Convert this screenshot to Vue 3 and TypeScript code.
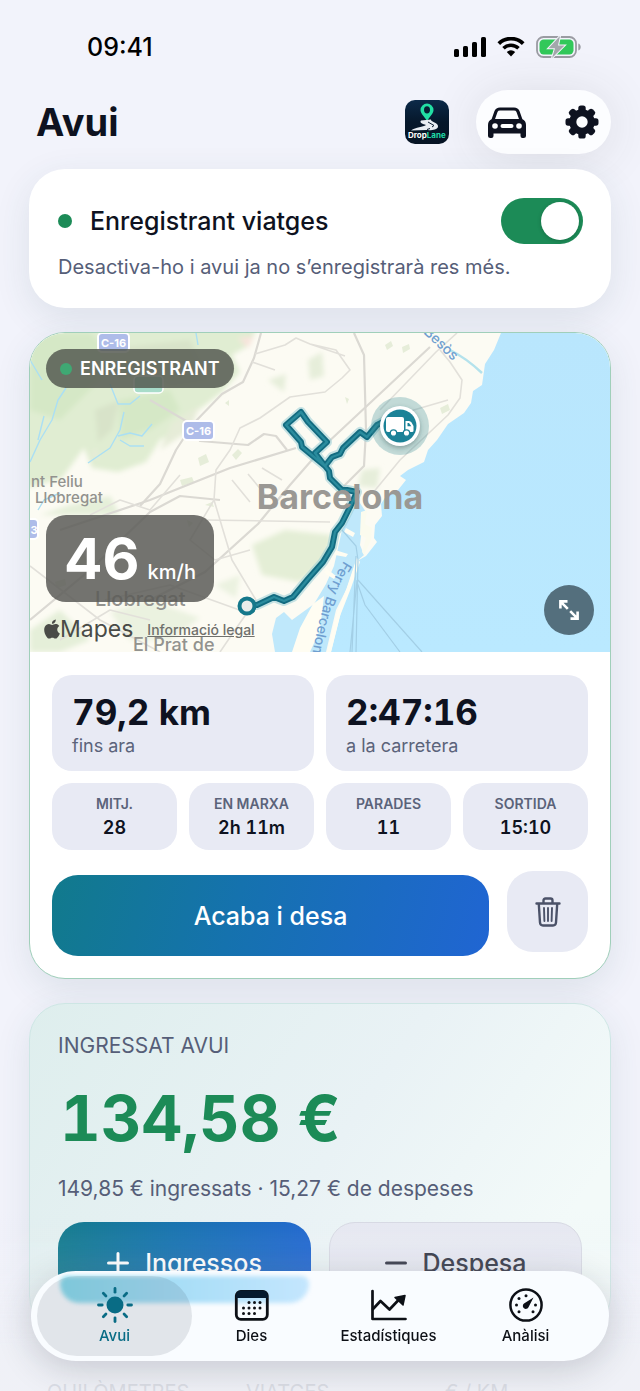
<script setup lang="ts">
import { ref } from 'vue'

interface Stat {
  label: string
  value: string
}

const recording = ref(true)
const activeTab = ref('Avui')

const totals: Stat[] = [
  { value: '79,2 km', label: 'fins ara' },
  { value: '2:47:16', label: 'a la carretera' },
]

const details: Stat[] = [
  { label: 'MITJ.', value: '28' },
  { label: 'EN MARXA', value: '2h 11m' },
  { label: 'PARADES', value: '11' },
  { label: 'SORTIDA', value: '15:10' },
]

const summary: string[] = ['QUILÒMETRES', 'VIATGES', '€ / KM']
const tabs: string[] = ['Avui', 'Dies', 'Estadístiques', 'Anàlisi']
const eighths: number[] = [0, 45, 90, 135, 180, 225, 270, 315]

const route =
  'M247 605 L257 605 L274 597 L284 601 L293 597 L308 579 L323 562 L332 547 L335 532 L342 523 L350 507 L357 492 L347 490 L342 490 L330 478 L329 471 L325 466 L302 447 L301 442 L286 425 L301 412 L308 422 L327 442 L315 453 L325 466 L332 457 L340 454 L343 448 L360 432 L367 437 L377 425 L385 421'
</script>

<template>
  <div class="screen">
    <div class="status">
      <span class="clock">09:41</span>
      <span class="signals">
        <svg width="32" height="20" viewBox="0 0 32 20" aria-hidden="true">
          <rect x="0" y="12" width="5" height="8" rx="1.6" />
          <rect x="9" y="9" width="5" height="11" rx="1.6" />
          <rect x="18" y="5" width="5" height="15" rx="1.6" />
          <rect x="27" y="0" width="5" height="20" rx="1.6" />
        </svg>
        <svg width="28" height="20" viewBox="0 0 28 20" aria-hidden="true">
          <path d="M1.8 6.6 A17.5 17.5 0 0 1 26.2 6.6" fill="none" stroke="#000" stroke-width="3.8" />
          <path d="M6.5 11.3 A10.8 10.8 0 0 1 21.5 11.3" fill="none" stroke="#000" stroke-width="3.6" />
          <path d="M9.8 15 A6.2 6.2 0 0 1 18.2 15 L14 19.6 Z" />
        </svg>
        <svg width="46" height="22" viewBox="0 0 46 22" aria-hidden="true">
          <rect x="1" y="1" width="39" height="20" rx="6.5" fill="none" stroke="#9a9ba2" stroke-width="1.8" />
          <rect x="3.5" y="3.5" width="34" height="15" rx="4.2" fill="#32c85a" />
          <path d="M42.3 7.5 C45.5 8.5 45.5 13.5 42.3 14.5 Z" fill="#9a9ba2" />
          <path d="M24 0 L12.5 12.3 H19 L16 22 L28.5 9.5 H22 Z" fill="#a3a7ab" stroke="#f3f4fb" stroke-width="2" paint-order="stroke" />
        </svg>
      </span>
    </div>

    <header class="header">
      <h1>Avui</h1>
      <svg class="logo" width="44" height="44" viewBox="0 0 44 44" role="img" aria-label="DropLane">
        <defs>
          <linearGradient id="logoBg" x1="0" y1="0" x2="0" y2="1">
            <stop offset="0" stop-color="#0c2a49" />
            <stop offset="0.5" stop-color="#06182b" />
            <stop offset="1" stop-color="#071424" />
          </linearGradient>
        </defs>
        <rect width="44" height="44" rx="10" fill="url(#logoBg)" />
        <path d="M22 21 C19 16 15.5 13.5 15.5 10 A6.5 6.5 0 0 1 28.5 10 C28.5 13.5 25 16 22 21 Z" fill="#22dfa4" />
        <ellipse cx="22" cy="9.8" rx="3" ry="3.6" fill="#072033" />
        <path d="M16 20.5 L26 19.5 C25 22 34 22.5 33 27 C32 30 26 30.5 21 30 L6 30.5 C11 27 18 27 21 25 C18 24 14 23 16 20.5 Z" fill="#e8edf2" />
        <path d="M23 22 L29 25.5 L27 27 M25 28.5 L22 29.5" fill="none" stroke="#0a1c2e" stroke-width="1" />
        <text x="3" y="38" class="logo-text" fill="#fff">Drop<tspan fill="#20dba8">Lane</tspan></text>
      </svg>
      <div class="actions">
        <button type="button" aria-label="Vehicle">
          <svg width="38" height="31" viewBox="0 0 38 31">
            <path d="M5 13 L8 4.5 Q9 2 12 2 H26 Q29 2 30 4.5 L33 13" fill="none" stroke="#0e1220" stroke-width="3.2" />
            <path d="M4 12 H34 Q38 13.5 38 18 V28.5 Q38 31 35.5 31 H34.5 Q32.5 31 32.5 29 V26.5 H5.5 V29 Q5.5 31 3.5 31 H2.5 Q0 31 0 28.5 V18 Q0 13.5 4 12 Z" fill="#0e1220" />
            <circle cx="7" cy="19" r="2.8" fill="#fff" />
            <circle cx="31" cy="19" r="2.8" fill="#fff" />
            <rect x="12.5" y="17" width="13" height="4" rx="2" fill="#fff" />
          </svg>
        </button>
        <button type="button" aria-label="Configuració">
          <svg width="34" height="34" viewBox="-17 -17 34 34">
            <rect v-for="a in eighths" :key="a" x="-3.7" y="-16.5" width="7.4" height="12" rx="2.6" :transform="`rotate(${a})`" fill="#0e1220" />
            <circle r="9.2" fill="none" stroke="#0e1220" stroke-width="7" />
            <circle r="5.7" fill="#fcfdff" />
          </svg>
        </button>
      </div>
    </header>

    <main class="content">
      <section class="card record">
        <div class="record-row">
          <span class="dot"></span>
          <label for="recording">Enregistrant viatges</label>
          <input id="recording" v-model="recording" class="switch" type="checkbox" role="switch" />
        </div>
        <p>Desactiva-ho i avui ja no s’enregistrarà res més.</p>
      </section>

      <section class="card trip">
        <div class="map">
          <svg class="map-art" viewBox="30 333 580 319" preserveAspectRatio="xMidYMid slice" role="img" aria-label="Mapa de Barcelona">
            <defs>
              <filter id="soft" x="-20%" y="-20%" width="140%" height="140%"><feGaussianBlur stdDeviation="2.5" /></filter>
              <linearGradient id="sea" x1="0" y1="0" x2="0" y2="1">
                <stop offset="0" stop-color="#b9e6fd" />
                <stop offset="1" stop-color="#bae9ff" />
              </linearGradient>
            </defs>
            <rect x="30" y="333" width="580" height="319" fill="#fcfbf3" />
            <!-- hills -->
            <g filter="url(#soft)">
              <path d="M20 323 H258 L250 345 L232 355 L240 372 L222 392 L196 412 L178 430 L160 440 L146 462 L118 472 L92 468 L84 448 L62 478 L20 490 Z" fill="#e0edd2" />
              <path d="M30 333 H90 L120 360 L80 400 L60 420 L30 410 Z M120 400 L170 390 L180 410 L150 430 L120 440 Z" fill="#d5e8c6" />
              <path d="M100 350 L190 340 L210 380 L170 386 L150 372 L120 380 Z M95 410 L120 400 L112 430 L98 442 Z" fill="#d8e3c9" />
              <path d="M172 423 L200 405 L190 430 L160 450 Z M90 455 L96 447 L100 460 Z" fill="#e6ecd8" />
              <path d="M70 505 L110 496 L120 515 H40 Z M30 630 L60 610 L90 640 L60 652 H30 Z" fill="#e5efd9" />
              <path d="M252 545 L285 530 L332 535 L326 560 L300 582 L262 575 Z" fill="#e4eed6" />
              <path d="M110 612 L150 600 L200 618 L170 640 L130 640 Z M215 585 L240 575 L236 598 Z" fill="#ebf2e0" />
              <path d="M308 360 L322 352 L324 376 L310 380 Z M362 470 L380 468 L377 488 L358 486 Z M268 380 L286 374 L284 392 Z" fill="#e6eeda" />
              <path d="M238 338 L254 336 L248 348 Z" fill="#f8e4dc" />
            </g>
            <g fill="#e6edd9">
              <path d="M198 458 l8 -4 l3 8 l-9 4z M232 455 l6 -6 l4 4 l-6 7z M180 480 l12 -3 l2 5 l-12 4z M385 345 l6 -4 l2 5 l-6 4z M440 408 l8 -4 l2 6 l-8 4z M402 347 l7 -3 l1 5 l-7 4z M345 397 l4 2 l-2 5z M225 403 l4 -3 v6z M55 582 l10 -3 l1 6 l-9 3z M187 520 l6 3 l-4 4z M205 505 l7 -3 l2 5z M70 560 l14 -6 l4 8 l-13 5z" />
            </g>
            <!-- streams -->
            <g fill="none" stroke="#aadff4" stroke-width="1.4" stroke-linejoin="round">
              <path d="M30 462 L40 440 L52 420 L58 400 L66 388 M38 440 L44 416 M88 463 L110 448 L120 430 L124 412 M118 436 L130 433 L142 436 L152 424 M120 440 L130 446 L144 446 M110 384 L118 404 L130 404 L140 396 M30 360 L42 380 M196 333 L198 345 M60 493 L44 500 L38 510" />
            </g>
            <!-- roads -->
            <g fill="none" stroke="#dbd9d3" stroke-width="2.2" stroke-linejoin="round">
              <path d="M261 333 L254 358 L243 382 L222 394 L193 424 L176 450 L160 484 L140 506" />
              <path d="M193 424 L200 441 L248 445 L264 434 L276 436 L287 450" />
              <path d="M150 400 L188 422 M354 333 L364 355 L366 430 L364 466 L340 490" />
              <path d="M60 530 L150 500 L230 468 L296 448" />
              <path d="M30 620 L90 570 L150 512 L180 496 L220 500" />
              <path d="M430 347 L370 403 L325 445 L290 485 L258 524 L205 572 L150 600" />
            </g>
            <g fill="none" stroke="#e2e0da" stroke-width="1.6" stroke-linejoin="round">
              <path d="M440 350 L450 362 L462 380 L460 398 L448 415 L430 432 L400 460 L372 494" />
              <path d="M457 333 L436 352 L380 410 M255 354 L285 345 L296 338 L310 344 L345 356 M310 344 L336 350 L350 370 L342 378 L325 392 L290 397 L260 418 L240 428 L230 450 L216 470 L214 500 L232 560 L256 600" />
              <path d="M205 520 L330 522 M214 500 L190 540 L215 560 L250 550 M30 566 L100 620 L160 652 M256 600 L235 630 L220 652" />
              <path d="M252 362 L275 370 M232 480 L250 502 M248 474 L268 498 M262 468 L282 480 M448 400 L400 414 M105 600 L170 585 L245 612" />
              <path d="M90 515 L120 500 L150 510 L180 475 M60 640 L110 610 L150 620" />
            </g>
            <!-- coast -->
            <path d="M501 333 L494 350 L485 364 L482 385 L473 391 L471 403 L464 413 L448 424 L437 440 L428 450 L424 462 L408 470 L400 476 L406 480 L398 490 L386 496 L381 504 L382 516 L375 525 L374 538 L377 542 L366 556 L359 560 L344 600 L331 652 H610 V333 Z" fill="url(#sea)" />
            <path d="M358 500 L366 512 L362 528 L360 545 L364 555 L356 562 L347 588 L336 610 L326 652 L275 652 L272 634 L276 618 L284 612 L292 620 L314 604 L326 584 L334 566 L338 548 L342 530 L350 516 Z" fill="#bfe8fb" />
            <path d="M357 557 L346 590 L337 612 L327 652 L331 652 L340 616 L351 588 L360 562 Z M335 550 L348 554 L346 557 L335 555 Z M346 528 L355 533 L353 537 L344 532 Z M326 568 L336 576 L334 579 L324 573 Z M313 604 L324 596 L320 630 L310 652 H292 L300 628 Z" fill="#fffdf2" />
            <path d="M361 512 L367 510 L365 524 L372 528 L371 540 L364 555 L362 552 L366 538 L360 535 Z" fill="#fbfbee" />
            <path d="M450 350 Q466 358 482 373" fill="none" stroke="#b4e2ec" stroke-width="2.5" />
            <path d="M342 530 L356 546 L358 560 L356 652 M356 556 L352 652 M357 580 L350 652 M357 582 L365 605 L400 652 M358 580 L422 652" fill="none" stroke="#a3cfe6" stroke-width="1.2" />
            <!-- road shields -->
            <g class="shield">
              <rect x="98" y="333" width="31" height="19" rx="4" />
              <text x="113.5" y="347">C-16</text>
              <rect x="183" y="421" width="31" height="19" rx="4" />
              <text x="198.5" y="435">C-16</text>
              <rect x="12" y="519" width="26" height="20" rx="4" />
              <text x="34" y="534">3</text>
            </g>
            <rect x="134" y="376" width="29" height="17" rx="4" fill="#a8dcc9" stroke="#fff" stroke-width="1.5" />
            <g class="place">
              <text x="31" y="487" font-size="15">nt Feliu</text>
              <text x="35" y="503" font-size="15">Llobregat</text>
              <text x="95" y="606" font-size="20">Llobregat</text>
              <text x="133" y="651" font-size="18">El Prat de</text>
            </g>
            <path id="besos" d="M423 333 L472 379" fill="none" />
            <text class="water river"><textPath href="#besos">Besòs</textPath></text>
            <path id="ferry" d="M344 561 Q320 598 311 664" fill="none" />
            <text class="water ferry"><textPath href="#ferry">Ferry Barcelon</textPath></text>
            <!-- recorded route -->
            <path :d="route" fill="none" stroke="#8fc9d4" stroke-opacity="0.5" stroke-width="10" stroke-linejoin="round" stroke-linecap="round" />
            <path :d="route" fill="none" stroke="#126b80" stroke-width="6" stroke-linejoin="round" stroke-linecap="round" />
            <path :d="route" fill="none" stroke="#2a8b9d" stroke-width="2.4" stroke-linejoin="round" />
            <text class="city" x="340" y="509">Barcelona</text>
            <circle cx="247" cy="606" r="7.5" fill="#e9ecea" stroke="#15788b" stroke-width="4" />
            <circle cx="400" cy="426" r="29" fill="#3b8d98" fill-opacity="0.3" />
            <circle cx="400" cy="428" r="20" fill="#244" fill-opacity="0.4" filter="url(#soft)" />
            <circle cx="400" cy="426" r="20" fill="#fff" />
            <circle cx="400" cy="426" r="16.5" fill="#1b8297" />
            <g fill="#fff">
              <path d="M388 417 H402 Q404 417 404 419 V432 H388 Q386 432 386 430 V419 Q386 417 388 417 Z" />
              <path d="M405.5 421 H409 Q410.5 421 411.5 422.5 L413.5 426 V431 Q413.5 432 412 432 H405.5 Z" />
              <path d="M407.5 423 H409 L411.3 426.2 H407.5 Z" fill="#1b8297" />
              <circle cx="393.5" cy="433" r="3.2" stroke="#1b8297" stroke-width="1.3" />
              <circle cx="406.5" cy="433" r="3.2" stroke="#1b8297" stroke-width="1.3" />
            </g>
          </svg>

          <span class="badge"><span class="badge-dot"></span>ENREGISTRANT</span>
          <span class="speed"><strong>46</strong><span>km/h</span></span>
          <div class="attribution">
            <span class="maps">
              <svg width="16" height="20" viewBox="2 0 20 24" aria-hidden="true">
                <path d="M12.152 6.896c-.948 0-2.415-1.078-3.960-1.040-2.040.027-3.910 1.183-4.961 3.014-2.117 3.675-.546 9.103 1.519 12.090 1.013 1.454 2.208 3.090 3.792 3.039 1.520-.065 2.090-.987 3.935-.987 1.831 0 2.350.987 3.960.948 1.637-.026 2.676-1.480 3.676-2.948 1.156-1.688 1.636-3.325 1.662-3.415-.039-.013-3.182-1.221-3.220-4.857-.026-3.040 2.480-4.494 2.597-4.559-1.429-2.090-3.623-2.324-4.390-2.376-2-.156-3.675 1.090-4.610 1.090zM15.530 3.830c.843-1.012 1.400-2.427 1.245-3.830-1.207.052-2.662.805-3.532 1.818-.780.896-1.454 2.338-1.273 3.714 1.338.104 2.715-.688 3.559-1.701" fill="#494b47" />
              </svg>Mapes</span>
            <a href="#">Informació legal</a>
          </div>
          <button class="expand" type="button" aria-label="Amplia el mapa">
            <svg width="20" height="20" viewBox="0 0 20 20" fill="none" stroke="#fff" stroke-width="2.6">
              <path d="M1.4 8.5 V1.4 H8.5 M1.6 1.6 L8.8 8.8 M18.6 11.5 V18.6 H11.5 M18.4 18.4 L11.2 11.2" />
            </svg>
          </button>
        </div>

        <div class="trip-body">
          <dl class="totals">
            <div v-for="t in totals" :key="t.label" class="total">
              <dd>{{ t.value }}</dd>
              <dt>{{ t.label }}</dt>
            </div>
          </dl>
          <dl class="details">
            <div v-for="d in details" :key="d.label" class="detail">
              <dt>{{ d.label }}</dt>
              <dd>{{ d.value }}</dd>
            </div>
          </dl>
          <div class="trip-actions">
            <button class="finish" type="button">Acaba i desa</button>
            <button class="discard" type="button" aria-label="Descarta el viatge">
              <svg width="26" height="30" viewBox="0 0 26 30" fill="none" stroke="#4b5268" stroke-width="2.4" stroke-linecap="round" stroke-linejoin="round">
                <path d="M1.5 6.5 H24.5 M8.5 6 V3.5 Q8.5 1.5 10.5 1.5 H15.5 Q17.5 1.5 17.5 3.5 V6 M3.8 7 L5 25.5 Q5.2 28.5 8 28.5 H18 Q20.8 28.5 21 25.5 L22.2 7" />
                <path d="M9 11 L9.4 24 M13 11 V24 M17 11 L16.6 24" stroke-width="1.9" />
              </svg>
            </button>
          </div>
        </div>
      </section>

      <section class="card income">
        <h2>INGRESSAT AVUI</h2>
        <p class="amount">134,58 €</p>
        <p class="breakdown">149,85 € ingressats · 15,27 € de despeses</p>
        <div class="income-actions">
          <button class="add" type="button">
            <svg width="22" height="22" viewBox="0 0 22 22" stroke="currentColor" stroke-width="3" stroke-linecap="round"><path d="M1.5 11 H20.5 M11 1.5 V20.5" /></svg>Ingressos
          </button>
          <button class="spend" type="button">
            <svg width="22" height="22" viewBox="0 0 22 22" stroke="currentColor" stroke-width="3" stroke-linecap="round"><path d="M1.5 11 H20.5" /></svg>Despesa
          </button>
        </div>
      </section>

      <section class="summary">
        <div v-for="s in summary" :key="s">{{ s }}</div>
      </section>
    </main>

    <div class="fade"></div>
    <nav class="tabbar">
      <button v-for="t in tabs" :key="t" type="button" class="tab" :class="{ active: t === activeTab }" @click="activeTab = t">
        <svg v-if="t === 'Avui'" width="36" height="36" viewBox="-18 -18 36 36">
          <circle r="8.5" fill="currentColor" />
          <path v-for="a in eighths" :key="a" d="M0 -12.8 V-16.5" :transform="`rotate(${a})`" stroke="currentColor" stroke-width="2.8" stroke-linecap="round" />
        </svg>
        <svg v-else-if="t === 'Dies'" width="36" height="36" viewBox="0 0 36 36">
          <rect x="2.3" y="4.3" width="31" height="28" rx="4.5" fill="none" stroke="#0d1016" stroke-width="2.8" />
          <path d="M2 10 Q2 3.5 7 3.5 H29 Q34 3.5 34 10 V11 H2 Z" fill="#051a2e" />
          <g fill="#0d1016">
            <circle cx="15" cy="15.5" r="1.5" /><circle cx="20.5" cy="15.5" r="1.5" /><circle cx="26" cy="15.5" r="1.5" />
            <circle cx="9.5" cy="21" r="1.5" /><circle cx="15" cy="21" r="1.5" /><circle cx="20.5" cy="21" r="1.5" /><circle cx="26" cy="21" r="1.5" />
            <circle cx="9.5" cy="26.5" r="1.5" /><circle cx="15" cy="26.5" r="1.5" /><circle cx="20.5" cy="26.5" r="1.5" />
          </g>
        </svg>
        <svg v-else-if="t === 'Estadístiques'" width="36" height="36" viewBox="0 0 36 36" fill="none" stroke="#0d1016" stroke-width="2.7" stroke-linecap="round" stroke-linejoin="round">
          <path d="M1.5 4 V32 H34.5" />
          <path d="M2 22 L9.5 14 L18.5 22.5 L28 12.5" />
          <path d="M24 10.5 L34 8.5 L32 18 Z" fill="#0d1016" stroke-width="1.5" />
        </svg>
        <svg v-else width="36" height="36" viewBox="0 0 36 36">
          <circle cx="18" cy="18" r="15.6" fill="none" stroke="#0d1016" stroke-width="2.5" />
          <path d="M25.5 10.5 L20.6 20 A3 3 0 1 1 16 16.5 Z" fill="#0d1016" />
          <g fill="#0d1016">
            <circle cx="8.5" cy="18" r="1.5" /><circle cx="11" cy="11.5" r="1.5" /><circle cx="18" cy="8.7" r="1.5" />
            <circle cx="27.5" cy="18" r="1.5" /><circle cx="25" cy="24.7" r="1.5" /><circle cx="11" cy="24.7" r="1.5" />
          </g>
        </svg>
        <span>{{ t }}</span>
      </button>
    </nav>
  </div>
</template>

<style>
html,
body {
  background: #f2f3fb;
}
</style>

<style scoped>
* {
  box-sizing: border-box;
}
.screen {
  position: relative;
  height: 100vh;
  overflow: hidden;
  padding: 0 29px;
  background: #f2f3fb;
  color: #0e1220;
  font-family: Inter, "Noto Sans", sans-serif;
}
button {
  padding: 0;
  border: 0;
  background: none;
  color: inherit;
  font: inherit;
  cursor: pointer;
}
svg {
  display: block;
}
h1,
h2,
p,
dl,
dd {
  margin: 0;
}
.status {
  display: flex;
  align-items: center;
  justify-content: space-between;
  height: 90px;
  padding: 4px 29px 0 58px;
}
.clock {
  color: #000;
  font-size: 25px;
  font-weight: 500;
}
.signals {
  display: flex;
  align-items: center;
  gap: 11px;
}
.header {
  display: flex;
  align-items: center;
  height: 64px;
  padding-left: 7px;
}
h1 {
  flex: 1;
  font-size: 38px;
  font-weight: 700;
  line-height: 48px;
}
.logo {
  margin-right: 27px;
}
.logo-text {
  font-size: 8px;
  font-weight: 700;
}
.actions {
  display: flex;
  align-items: center;
  justify-content: space-between;
  width: 135px;
  height: 64px;
  padding: 0 12px;
  border-radius: 32px;
  background: #fcfdff;
  box-shadow: 0 4px 50px rgba(60, 60, 60, 0.12);
}
.content {
  display: flex;
  flex-direction: column;
  gap: 24px;
  padding-top: 15px;
}
.card {
  border-radius: 36px;
  background: #fff;
  box-shadow: 0 10px 36px rgba(50, 80, 90, 0.11);
}
.record {
  padding: 29px 28px 27px 29px;
}
.record-row {
  display: flex;
  align-items: center;
  height: 46px;
}
.dot {
  width: 14px;
  height: 14px;
  margin-right: 18px;
  border-radius: 50%;
  background: #1c8b57;
}
.record label {
  flex: 1;
  font-size: 25px;
  font-weight: 500;
}
.switch {
  width: 82px;
  height: 46px;
  margin: 0;
  padding: 4px;
  border-radius: 23px;
  background: #c9ccd6;
  appearance: none;
  cursor: pointer;
}
.switch::before {
  display: block;
  width: 38px;
  height: 38px;
  border-radius: 50%;
  background: #fff;
  box-shadow: 0 1px 4px rgba(0, 0, 0, 0.2);
  content: "";
}
.switch:checked {
  background: #1c8b57;
}
.switch:checked::before {
  margin-left: auto;
}
.record p {
  margin-top: 10px;
  color: #565e78;
  font-size: 20px;
  line-height: 27px;
}
.trip {
  overflow: hidden;
  border: 1px solid #a0cfba;
}
.map {
  position: relative;
  height: 319px;
}
.map-art {
  width: 100%;
  height: 100%;
}
.shield rect {
  fill: #aebce9;
  stroke: #fff;
  stroke-width: 2;
}
.shield text {
  fill: #fff;
  font-size: 11px;
  font-weight: 700;
  text-anchor: middle;
}
.place {
  fill: #92928e;
  font-weight: 500;
}
.city {
  fill: #9a9894;
  font-size: 34px;
  font-weight: 700;
  text-anchor: middle;
}
.water {
  fill: #6f9fd0;
  font-weight: 500;
}
.river {
  font-size: 14px;
}
.ferry {
  font-size: 14px;
}
.badge {
  position: absolute;
  top: 16px;
  left: 16px;
  display: flex;
  align-items: center;
  gap: 8px;
  height: 39px;
  padding: 0 14px;
  border-radius: 20px;
  background: rgba(84, 88, 80, 0.84);
  color: #fff;
  font-size: 18px;
  font-weight: 600;
}
.badge-dot {
  width: 12px;
  height: 12px;
  border-radius: 50%;
  background: #3fa873;
}
.speed {
  position: absolute;
  top: 182px;
  left: 16px;
  display: flex;
  align-items: baseline;
  gap: 8px;
  height: 87px;
  padding: 0 18px;
  border-radius: 20px;
  background: rgba(90, 91, 87, 0.85);
  color: #fff;
  font-size: 20px;
  font-weight: 500;
  line-height: 87px;
}
.speed strong {
  font-size: 57px;
  font-weight: 700;
}
.attribution {
  position: absolute;
  bottom: 9px;
  left: 14px;
  display: flex;
  align-items: center;
  gap: 14px;
  color: #494b47;
}
.maps {
  display: flex;
  align-items: center;
  font-size: 23px;
  line-height: 28px;
}
.attribution a {
  color: #6f706c;
  font-size: 14px;
  font-weight: 500;
}
.expand {
  position: absolute;
  right: 16px;
  bottom: 17px;
  display: grid;
  place-items: center;
  width: 50px;
  height: 50px;
  border-radius: 50%;
  background: #546f7d;
}
.trip-body {
  padding: 23px 22px 22px;
}
.totals {
  display: grid;
  grid-template-columns: repeat(2, 1fr);
  gap: 12px;
}
.total,
.detail {
  display: flex;
  flex-direction: column;
  border-radius: 20px;
  background: #e8eaf4;
}
.total {
  height: 96px;
  padding: 16px 20px 0;
}
.total dd {
  font-size: 35px;
  font-weight: 700;
  font-variant-numeric: tabular-nums;
  line-height: 42px;
}
.total dt {
  color: #5b637a;
  font-size: 18px;
  line-height: 26px;
}
.details {
  display: grid;
  grid-template-columns: repeat(4, 1fr);
  gap: 12px;
  margin-top: 12px;
}
.detail {
  align-items: center;
  height: 67px;
  padding-top: 9px;
}
.detail dt {
  color: #5b637a;
  font-size: 14px;
  font-weight: 600;
  line-height: 24px;
}
.detail dd {
  font-size: 18px;
  font-weight: 600;
  font-variant-numeric: tabular-nums;
  line-height: 24px;
}
.trip-actions {
  display: flex;
  align-items: flex-start;
  gap: 18px;
  margin-top: 21px;
}
.finish {
  flex: 1;
  height: 81px;
  margin-top: 4px;
  border-radius: 26px;
  background: linear-gradient(105deg, #117a8c, #1572ae 42%, #2065d3);
  color: #fff;
  font-size: 25px;
  font-weight: 500;
}
.discard {
  display: grid;
  place-items: center;
  width: 81px;
  height: 81px;
  border-radius: 26px;
  background: #e8eaf4;
}
.income {
  padding: 28px 28px 28px;
  border: 1px solid #cde6e4;
  background: linear-gradient(125deg, #deeeed, #e9f2f5 50%, #f3faf9 85%);
}
.income h2 {
  color: #565e78;
  font-size: 21px;
  font-weight: 400;
  line-height: 28px;
}
.amount {
  margin-top: 18px;
  padding-left: 2px;
  color: #1c8b57;
  font-size: 63px;
  font-weight: 700;
  font-variant-numeric: tabular-nums;
  line-height: 80px;
}
.breakdown {
  margin-top: 17px;
  color: #565e78;
  font-size: 21px;
  line-height: 28px;
}
.income-actions {
  display: grid;
  grid-template-columns: repeat(2, 1fr);
  gap: 18px;
  margin-top: 19px;
}
.income-actions button {
  display: flex;
  align-items: center;
  justify-content: center;
  gap: 16px;
  height: 81px;
  border-radius: 26px;
  font-size: 25px;
  font-weight: 500;
}
.add {
  background: linear-gradient(105deg, #117a8c, #1572ae 42%, #2065d3);
  color: #fff;
}
.income-actions .spend {
  border: 1px solid #d8dae4;
  background: #e7e9f2;
  color: #343746;
}
.summary {
  display: grid;
  grid-template-columns: repeat(3, 1fr);
  gap: 15px;
  margin-top: 4px;
  color: #8d92a0;
  font-size: 20px;
  line-height: 24px;
}
.summary div {
  padding: 20px 0 20px 18px;
  white-space: nowrap;
}
.fade {
  position: fixed;
  right: 0;
  bottom: 0;
  left: 0;
  height: 180px;
  background: linear-gradient(rgba(238, 240, 246, 0), rgba(238, 240, 246, 0.12) 35%, rgba(238, 240, 246, 0.8) 75%);
  pointer-events: none;
}
.tabbar {
  position: fixed;
  right: 31px;
  bottom: 30px;
  left: 31px;
  display: grid;
  grid-template-columns: repeat(4, 1fr);
  height: 90px;
  padding: 5px 15px;
  border-radius: 45px;
  background: #f9fcff;
  box-shadow: 0 8px 36px rgba(40, 45, 55, 0.2);
}
.tabbar::after {
  position: absolute;
  top: 5px;
  left: 29px;
  width: 43%;
  height: 27px;
  border-radius: 8px 8px 20px 20px;
  background: linear-gradient(90deg, #8adcee, #a9def7 50%, #c4e6fe);
  filter: blur(2px);
  content: "";
}
.tab {
  position: relative;
  z-index: 1;
  display: flex;
  flex-direction: column;
  align-items: center;
  padding-top: 11px;
  color: #0d1016;
  font-size: 15px;
  font-weight: 500;
  line-height: 26px;
}
.tab svg,
.tab span {
  position: relative;
}
.tab.active {
  color: #096c85;
}
.tab.active::before {
  position: absolute;
  inset: 0 -9px;
  border-radius: 40px;
  background: rgba(40, 50, 60, 0.11);
  content: "";
}
</style>
